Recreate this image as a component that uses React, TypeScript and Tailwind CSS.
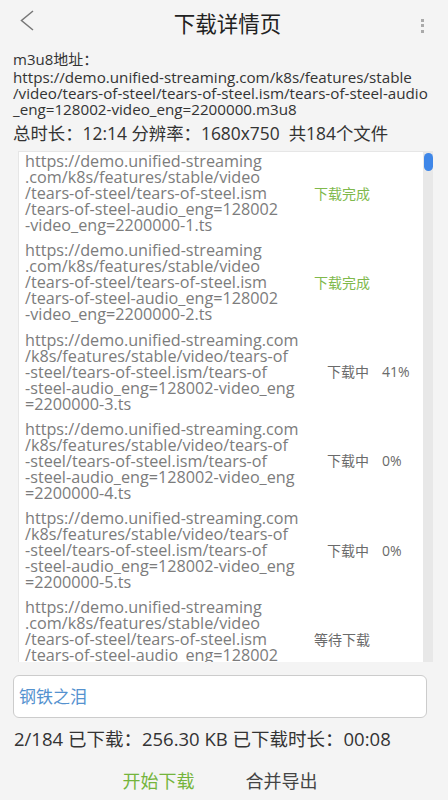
import React from "react";

type Item = { lines: string[]; status: string; pct?: string; color: string; wide: boolean };

const shortLines = (n: number) => [
  "https://demo.unified-streaming",
  ".com/k8s/features/stable/video",
  "/tears-of-steel/tears-of-steel.ism",
  "/tears-of-steel-audio_eng=128002",
  `-video_eng=2200000-${n}.ts`,
];
const wideLines = (n: number) => [
  "https://demo.unified-streaming.com",
  "/k8s/features/stable/video/tears-of",
  "-steel/tears-of-steel.ism/tears-of",
  "-steel-audio_eng=128002-video_eng",
  `=2200000-${n}.ts`,
];

const items: Item[] = [
  { lines: shortLines(1), status: "下载完成", color: "text-[#80b94c]", wide: false },
  { lines: shortLines(2), status: "下载完成", color: "text-[#80b94c]", wide: false },
  { lines: wideLines(3), status: "下载中", pct: "41%", color: "text-[#6a6a6a]", wide: true },
  { lines: wideLines(4), status: "下载中", pct: "0%", color: "text-[#6a6a6a]", wide: true },
  { lines: wideLines(5), status: "下载中", pct: "0%", color: "text-[#6a6a6a]", wide: true },
  { lines: shortLines(6), status: "等待下载", color: "text-[#6a6a6a]", wide: false },
];

export default function App() {
  return (
    <div className="w-[448px] h-[800px] bg-[#f4f4f4] overflow-hidden flex flex-col font-['Open_Sans','Noto_Sans_CJK_SC',sans-serif]">
      {/* header */}
      <div className="h-[45px] flex items-center justify-between pl-[20px] pr-[24px] shrink-0">
        <svg width="14" height="22" viewBox="0 0 14 22" className="-mt-[3px]">
          <path d="M13 1 L1.5 10.5 L13 20" fill="none" stroke="#777" strokeWidth="1.5" />
        </svg>
        <div className="text-[21.5px] text-[#222] leading-none font-['Noto_Sans_CJK_SC',sans-serif]">下载详情页</div>
        <div className="flex flex-col gap-[2.5px] mt-[6px]">
          <div className="w-[3px] h-[3px] bg-[#aaa]" />
          <div className="w-[3px] h-[3px] bg-[#aaa]" />
          <div className="w-[3px] h-[3px] bg-[#aaa]" />
        </div>
      </div>

      <div className="px-[13px] pt-[5px] text-[15px] text-[#333]">
        <div className="leading-[19px]">m3u8地址：</div>
        <div className="leading-[16px] whitespace-nowrap text-[15.2px]">
          <div>https://demo.unified-streaming.com/k8s/features/stable</div>
          <div>/video/tears-of-steel/tears-of-steel.ism/tears-of-steel-audio</div>
          <div>_eng=128002-video_eng=2200000.m3u8</div>
        </div>
      </div>

      <div className="px-[13px] mt-[5px] text-[17.4px] leading-[22px] text-[#333] whitespace-nowrap">
        总时长：12:14 分辨率：1680x750&nbsp; 共184个文件
      </div>

      {/* list */}
      <div className="ml-[18px] mr-[15px] mt-[7px] flex h-[511px] shrink-0">
        <div className="flex-1 bg-white overflow-hidden pl-[6px] pt-[1px] border-l border-t border-[#e6e6e6]">
          {items.map((it, i) => (
            <div key={i} className="flex items-center mb-[9.3px]">
              <div
                className={`text-[16.2px] leading-[16px] text-[#7c7c7c] ${
                  it.wide ? "w-[302px]" : "w-[289px]"
                }`}
              >
                {it.lines.map((l, j) => (
                  <div key={j} className="whitespace-nowrap">{l}</div>
                ))}
              </div>
              <div className={`flex text-[14px] ${it.color}`}>
                <span>{it.status}</span>
                {it.pct && <span className="ml-[13px]">{it.pct}</span>}
              </div>
            </div>
          ))}
        </div>
        <div className="w-[10px] bg-[#e8e8e8] relative">
          <div className="absolute left-[1px] top-[2px] w-[9px] h-[18px] rounded-full bg-[#3f87e8]" />
        </div>
      </div>

      <div className="ml-[13px] mr-[21px] mt-[13px] h-[43px] shrink-0 rounded-[6px] border border-[#cccccc] bg-white flex items-center pl-[5px] text-[17px] text-[#5592cf]">
        钢铁之泪
      </div>

      <div className="px-[14px] mt-[10px] text-[18.5px] leading-[22px] text-[#333] whitespace-nowrap">
        2/184 已下载：256.30 KB 已下载时长：00:08
      </div>

      <div className="flex justify-center gap-[51px] mt-[19px] text-[18px] leading-[24px] pr-[8px]">
        <span className="text-[#74b43c]">开始下载</span>
        <span className="text-[#444]">合并导出</span>
      </div>
    </div>
  );
}
